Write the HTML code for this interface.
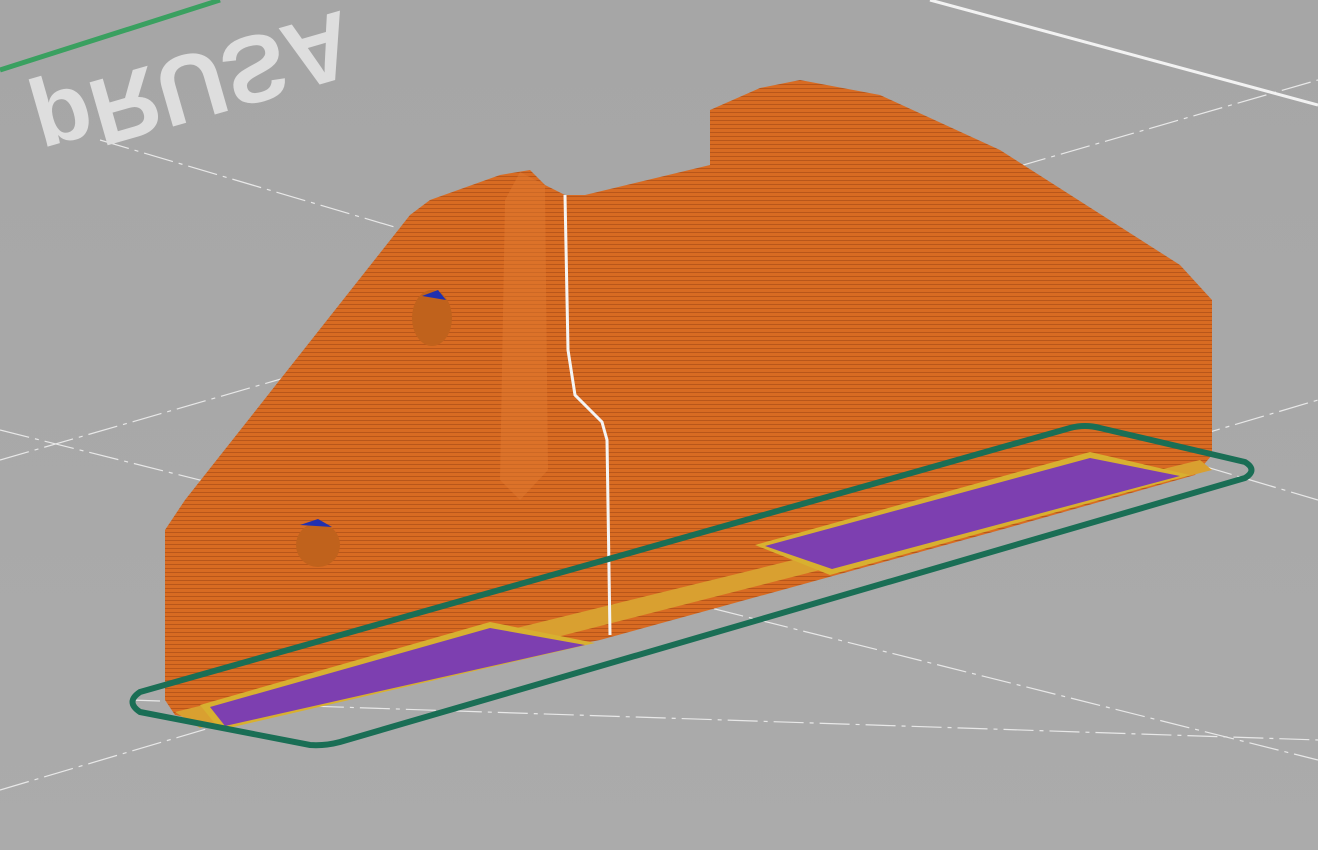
<!DOCTYPE html>
<html><head><meta charset="utf-8"><style>
html,body{margin:0;padding:0;width:1318px;height:850px;overflow:hidden;background:#a9a9a9}
</style></head><body>
<svg width="1318" height="850" viewBox="0 0 1318 850" xmlns="http://www.w3.org/2000/svg">
<defs>
<linearGradient id="bg" x1="0" y1="0" x2="0" y2="1">
<stop offset="0" stop-color="#a6a6a6"/><stop offset="1" stop-color="#ababab"/></linearGradient>
<pattern id="layers" width="4" height="4" patternUnits="userSpaceOnUse">
<rect width="4" height="4" fill="#d86b22"/><rect width="4" height="1" fill="#b8561a"/></pattern>
</defs>
<rect width="1318" height="850" fill="url(#bg)"/>
<g stroke="#e8e8e8" stroke-width="1.2" stroke-dasharray="30,6,4,6" fill="none">
<line x1="0" y1="460" x2="1318" y2="80"/>
<line x1="0" y1="790" x2="1318" y2="400"/>
<line x1="100" y1="140" x2="1318" y2="500"/>
<line x1="0" y1="430" x2="1318" y2="760"/>
<line x1="130" y1="700" x2="1318" y2="740"/>
</g>
<line x1="930" y1="0" x2="1318" y2="105" stroke="#f2f2f2" stroke-width="3"/>
<line x1="0" y1="70" x2="220" y2="0" stroke="#3aa060" stroke-width="5"/>
<text x="0" y="0" text-anchor="middle" transform="translate(185,55) rotate(-16) scale(1,-1)" font-family="Liberation Sans,sans-serif" font-weight="bold" font-size="95" fill="#dedede">pRUSA</text>
<polygon points="165,700 165,530 185,500 410,215 430,200 500,175 530,170 545,185 565,195 585,195 710,165 710,110 760,88 800,80 880,95 1000,150 1180,265 1212,300 1212,455 1195,475 1000,530 600,640 200,720 175,715" fill="url(#layers)"/>
<polygon points="520,172 545,185 548,470 520,500 500,480 505,200" fill="#e07a30" opacity="0.5"/>
<polygon points="175,712 1200,460 1212,470 200,728" fill="#d9a030"/>
<polygon points="200,705 490,622 595,643 220,730" fill="#d8b030"/>
<polygon points="210,707 490,628 585,645 225,726" fill="#7d3fb0"/>
<polygon points="755,545 1090,452 1190,475 830,575" fill="#d8b030"/>
<polygon points="765,546 1090,458 1180,476 832,569" fill="#7d3fb0"/>
<polyline points="565,195 568,350 575,395 602,422 607,440 610,635" fill="none" stroke="#f4f4f4" stroke-width="3"/>
<ellipse cx="432" cy="318" rx="20" ry="28" fill="#c0621c"/>
<path d="M422 296 L438 290 L446 300 Z" fill="#2030b0"/>
<ellipse cx="318" cy="545" rx="22" ry="22" fill="#c0621c"/>
<path d="M300 525 L318 519 L332 527 Z" fill="#2030b0"/>
<path d="M140 692 L1070 428 Q1085 424 1100 428 L1245 462 Q1258 470 1245 478 L340 742 Q325 746 310 745 L140 712 Q125 702 140 692 Z" fill="none" stroke="#1a6e55" stroke-width="6"/>
</svg>
</body></html>
